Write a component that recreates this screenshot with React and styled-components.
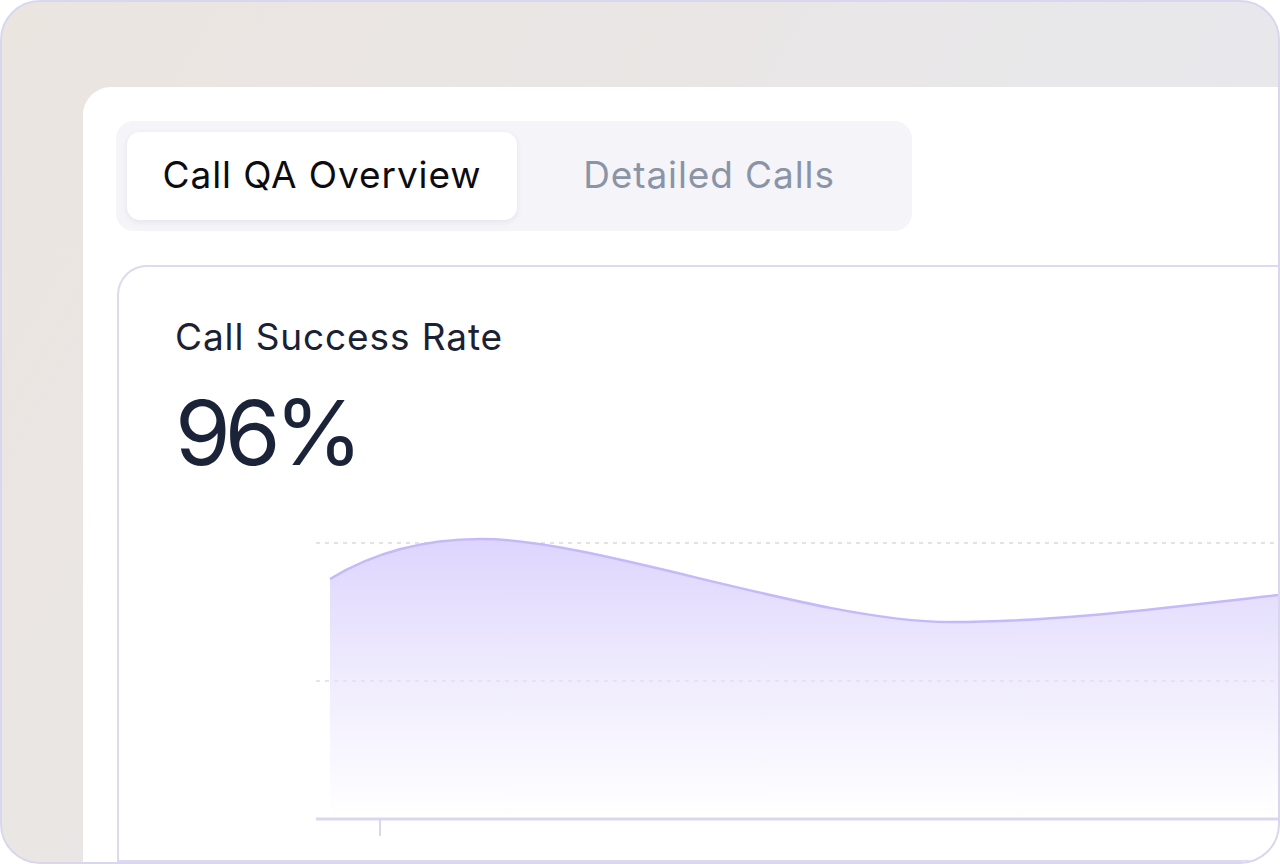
import React from 'react'
import styled, { createGlobalStyle } from 'styled-components'

const GlobalStyle = createGlobalStyle`
  html, body {
    margin: 0;
    padding: 0;
    background: #ffffff;
    overflow: hidden;
  }
  body {
    font-family: Inter, "Noto Sans", sans-serif;
    -webkit-font-smoothing: antialiased;
  }
`

const tabs = ['Call QA Overview', 'Detailed Calls']

const Chart = () => (
  <ChartSvg width="1000" height="310" viewBox="0 0 1000 310">
    <defs>
      <linearGradient id="areaFill" x1="0" y1="0" x2="0" y2="1">
        <stop offset="0%" stopColor="#ddd5fd" />
        <stop offset="45%" stopColor="#eeeafd" />
        <stop offset="100%" stopColor="#ffffff" />
      </linearGradient>
    </defs>
    <line x1="0" y1="12" x2="1000" y2="12" stroke="#e2e2ea" strokeWidth="2" strokeDasharray="4 5" />
    <path
      d="M14 48 C60 20 110 8 165 8 C280 8 500 91 634 91 C760 91 880 72 1000 60 L1000 286 L14 286 Z"
      fill="url(#areaFill)"
    />
    <line x1="0" y1="150" x2="1000" y2="150" stroke="#e4e4ec" strokeWidth="2" strokeDasharray="4 5" />
    <path
      d="M14 48 C60 20 110 8 165 8 C280 8 500 91 634 91 C760 91 880 72 1000 60"
      fill="none"
      stroke="#c5b9f9"
      strokeWidth="2.5"
    />
    <line x1="0" y1="288" x2="1000" y2="288" stroke="#d9d7ee" strokeWidth="3" />
    <line x1="64" y1="289" x2="64" y2="305" stroke="#d9d7ee" strokeWidth="2" />
  </ChartSvg>
)

const App = () => (
  <>
    <GlobalStyle />
    <Frame>
      <Panel>
        <TabGroup>
          {tabs.map((t, i) => (
            <Tab key={t} active={i === 0}>{t}</Tab>
          ))}
        </TabGroup>
        <Card>
          <CardTitle>Call Success Rate</CardTitle>
          <BigValue>96%</BigValue>
          <Chart />
        </Card>
      </Panel>
    </Frame>
  </>
)

const Frame = styled.div`
  width: 1280px;
  height: 864px;
  box-sizing: border-box;
  border: 2px solid #d8d7ee;
  border-radius: 40px;
  overflow: hidden;
  background: linear-gradient(120deg, #ebe5e0 0%, #e9e6e5 40%, #e8e8ec 75%, #e8e8ec 100%);
  padding: 85px 0 0 81px;
  display: flex;
`

const Panel = styled.div`
  flex: 1;
  background: #ffffff;
  border-top-left-radius: 28px;
  padding: 34px 0 0 33px;
  display: flex;
  flex-direction: column;
  min-width: 0;
`

const TabGroup = styled.div`
  width: 796px;
  height: 110px;
  box-sizing: border-box;
  padding: 11px;
  background: #f4f4f9;
  border-radius: 18px;
  display: grid;
  grid-template-columns: 390px 1fr;
`

const Tab = styled.div`
  display: flex;
  align-items: center;
  justify-content: center;
  padding-bottom: 3px;
  border-radius: 13px;
  font-size: 37px;
  font-weight: 400;
  letter-spacing: 0.9px;
  color: ${p => (p.active ? '#0c0c10' : '#8a94a6')};
  background: ${p => (p.active ? '#ffffff' : 'transparent')};
  box-shadow: ${p => (p.active ? '0 2px 6px rgba(30, 30, 70, 0.07)' : 'none')};
`

const Card = styled.div`
  margin: 34px -60px 0 1px;
  flex: 1;
  border: 2px solid #dcdaf0;
  border-top-left-radius: 30px;
  padding: 48px 0 0 56px;
  display: flex;
  flex-direction: column;
`

const CardTitle = styled.div`
  font-size: 37px;
  color: #1b2133;
  letter-spacing: 0.9px;
  line-height: 44px;
`

const BigValue = styled.div`
  margin-top: 26px;
  font-size: 90px;
  line-height: 96px;
  color: #1b2338;
  letter-spacing: -6px;
`

const ChartSvg = styled.svg`
  display: block;
  margin: 50px 0 0 141px;
`

export default App
